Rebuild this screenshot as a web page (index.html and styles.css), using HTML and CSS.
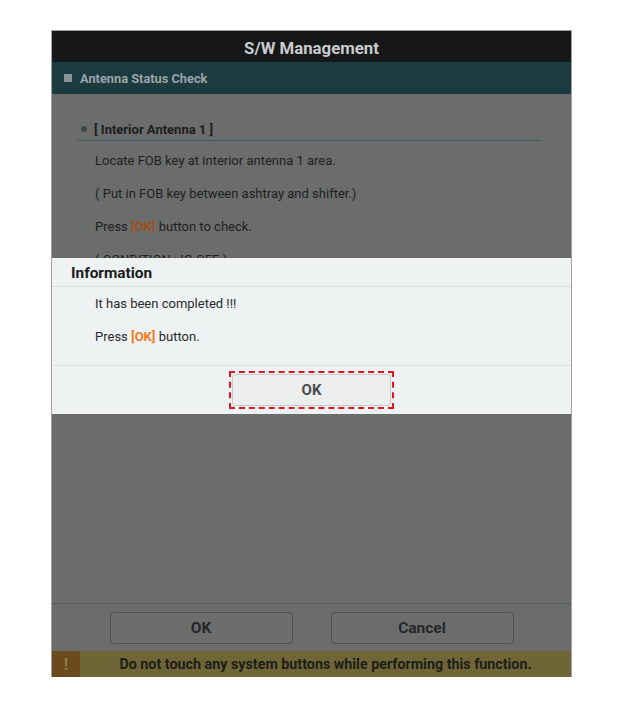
FILE: index.html
```html
<!DOCTYPE html>
<html>
<head>
<meta charset="utf-8">
<link rel="stylesheet" href="styles.css">
</head>
<body>
<div class="frame">
  <div class="header">S/W Management</div>
  <div class="subbar"><span class="sq"></span>Antenna Status Check</div>
  <div class="content">
    <div class="sec-title"><span class="dot"></span>[ Interior Antenna 1 ]</div>
    <div class="lines">
      <p>Locate FOB key at interior antenna 1 area.</p>
      <p>( Put in FOB key between ashtray and shifter.)</p>
      <p>Press <b class="hl">[OK]</b> button to check.</p>
      <p>( CONDITION : IG OFF )</p>
    </div>
  </div>
  <div class="footer">
    <button class="fbtn">OK</button>
    <button class="fbtn">Cancel</button>
  </div>
  <div class="warn"><span class="excl">!</span><span class="wtext">Do not touch any system buttons while performing this function.</span></div>

  <div class="dialog">
    <div class="dtitle">Information</div>
    <div class="dbody">
      <p>It has been completed !!!</p>
      <p>Press <b class="dhl">[OK]</b> button.</p>
    </div>
    <div class="dfoot"><span class="mark"><button class="dbtn">OK</button></span></div>
  </div>
</div>
</body>
</html>
```
FILE: styles.css
```css
html, body { margin: 0; padding: 0; background: #ffffff; }
body { font-family: Roboto, "Liberation Sans", Arial, sans-serif; }
.frame {
  position: relative;
  margin: 31px 0 0 52px;
  width: 519px;
  height: 646px;
  display: flex;
  flex-direction: column;
  background: #6b6c6c;
  box-shadow: 0 0 0 1px #a0a0a0;
}
.header {
  height: 31px;
  background: #151719;
  color: #c9cacb;
  font-weight: bold;
  font-size: 16.8px;
  display: flex;
  align-items: center;
  justify-content: center;
  padding-top: 2px;
  box-sizing: border-box;
}
.subbar {
  height: 32px;
  background: #1b3b40;
  color: #9aa4a6;
  font-weight: bold;
  font-size: 12.8px;
  display: flex;
  align-items: center;
  padding-left: 12px;
}
.sq { width: 8px; height: 8px; background: #8a9496; margin-right: 8px; }
.content {
  flex: 1;
  padding: 25px 30px 0 26px;
  color: #1e1f1f;
  font-size: 13px;
}
.sec-title {
  display: flex;
  align-items: center;
  font-weight: bold;
  font-size: 13px;
  height: 20px;
  padding-left: 3px;
  padding-bottom: 1px;
  border-bottom: 1px solid #3f5a62;
  color: #1c1d1e;
}
.dot { width: 6px; height: 6px; border-radius: 50%; background: #3f4446; margin-right: 7px; }
.lines { padding-left: 17px; padding-top: 10px; }
.lines p { margin: 0; height: 33px; line-height: 20px; }
.hl { color: #a0501f; }
.footer {
  height: 48px;
  border-top: 1px solid #555859;
  display: flex;
  justify-content: center;
  gap: 38px;
  padding-top: 8px;
  box-sizing: border-box;
}
.fbtn {
  width: 183px;
  height: 32px;
  background: #6c6d6d;
  border: 1px solid #4d4f50;
  border-radius: 3px;
  font-family: inherit;
  font-weight: bold;
  font-size: 15.5px;
  color: #262728;
}
.warn {
  height: 26px;
  background: #6f6637;
  display: flex;
  align-items: center;
}
.excl {
  width: 28px;
  height: 26px;
  background: #6b4b1c;
  color: #8f7c57;
  font-weight: bold;
  font-size: 16px;
  display: flex;
  align-items: center;
  justify-content: center;
}
.wtext {
  flex: 1;
  text-align: center;
  font-weight: bold;
  font-size: 14.3px;
  color: #1e1d17;
}
.dialog {
  position: absolute;
  left: 0;
  right: 0;
  top: 227px;
  height: 156px;
  background: #eef2f2;
  display: flex;
  flex-direction: column;
}
.dtitle {
  height: 29px;
  border-bottom: 1px solid #d9dddd;
  font-weight: bold;
  font-size: 15.4px;
  color: #1a1a1a;
  display: flex;
  align-items: center;
  padding-left: 19px;
  box-sizing: border-box;
  padding-top: 2px;
}
.dbody {
  height: 79px;
  border-bottom: 1px solid #dde1e1;
  padding: 7px 0 0 43px;
  box-sizing: border-box;
  font-size: 13px;
  color: #2a2a2a;
}
.dbody p { margin: 0; height: 33px; line-height: 20px; }
.dhl { color: #ef7a22; }
.dfoot {
  flex: 1;
  display: flex;
  justify-content: center;
  align-items: flex-start;
  padding-top: 5px;
}
.mark {
  display: flex;
  padding: 1px;
  border: 2px dashed #e8121c;
}
.dbtn {
  width: 159px;
  height: 32px;
  background: #edefee;
  border: 1px solid #c7cbcb;
  border-radius: 3px;
  font-family: inherit;
  font-weight: bold;
  font-size: 15px;
  color: #4a4d50;
}
```
